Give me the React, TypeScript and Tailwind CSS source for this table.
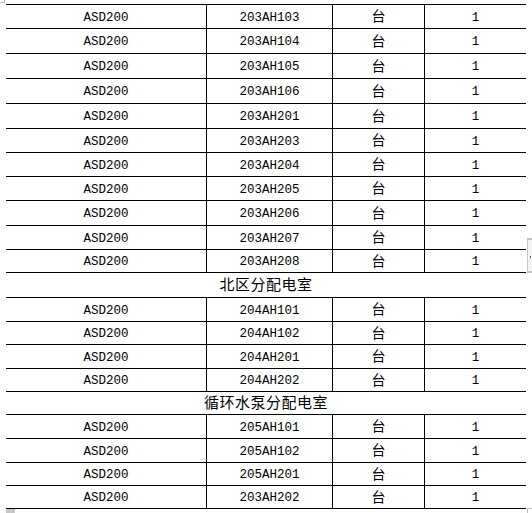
import React from 'react'

type Row =
  | { kind: 'item'; model: string; code: string; unit: string; qty: string }
  | { kind: 'group'; title: string }

const item = (code: string): Row => ({ kind: 'item', model: 'ASD200', code, unit: '台', qty: '1' })

const rows: Row[] = [
  item('203AH103'),
  item('203AH104'),
  item('203AH105'),
  item('203AH106'),
  item('203AH201'),
  item('203AH203'),
  item('203AH204'),
  item('203AH205'),
  item('203AH206'),
  item('203AH207'),
  item('203AH208'),
  { kind: 'group', title: '北区分配电室' },
  item('204AH101'),
  item('204AH102'),
  item('204AH201'),
  item('204AH202'),
  { kind: 'group', title: '循环水泵分配电室' },
  item('205AH101'),
  item('205AH102'),
  item('205AH201'),
  item('203AH202'),
]

// y of each horizontal rule in the screenshot
const lines = [4, 28, 53, 78, 103, 128, 152, 176, 200, 225, 249, 272, 297, 321, 344, 368, 391, 414, 438, 462, 485, 508]

const latin = "font-['Liberation_Mono','DejaVu_Sans_Mono',monospace] text-[12.5px] pt-[3px]"
const cjk = "font-['Noto_Sans_CJK_SC','Noto_Sans',sans-serif] pb-[2px]"

export default function App() {
  return (
    <div className="relative w-[532px] h-[513px] bg-white overflow-hidden text-black">
      {/* page corner marks */}
      <div className="absolute left-0 top-0 w-[5px] h-[3px] border-r border-b border-[#bdbdbd]" />
      <div className="absolute left-[6px] top-[509px] w-[9px] h-[4px] bg-[#c8c8c8]" />
      <div className="absolute right-0 top-[238px] w-[5px] h-[35px] bg-[#f3f3f3] border-t-2 border-b-2 border-l border-[#c4c4c4]">
        <div className="absolute right-[1px] top-[16px] w-[1px] h-[2px] bg-[#555]" />
      </div>
      <div className="absolute left-[527px] top-[508px] w-[5px] h-[5px] border-l border-t border-[#bdbdbd]" />

      <div className="pt-[4px] pl-[6px]">
        <div className="w-[520px] border-t border-black">
          {rows.map((r, i) => {
            const h = lines[i + 1] - lines[i]
            if (r.kind === 'group') {
              return (
                <div key={i} style={{ height: h }}
                  className={`flex items-center justify-center border-b border-black text-[15px] tracking-[0.5px] ${cjk}`}>
                  {r.title}
                </div>
              )
            }
            return (
              <div key={i} style={{ height: h }} className="flex border-b border-black">
                <div className={`w-[201px] flex items-center justify-center border-r border-black ${latin}`}>{r.model}</div>
                <div className={`w-[126px] flex items-center justify-center border-r border-black ${latin}`}>{r.code}</div>
                <div className={`w-[92px] flex items-center justify-center border-r border-black text-[14px] ${cjk}`}>{r.unit}</div>
                <div className={`w-[101px] flex items-center justify-center ${latin}`}>{r.qty}</div>
              </div>
            )
          })}
        </div>
      </div>
    </div>
  )
}
